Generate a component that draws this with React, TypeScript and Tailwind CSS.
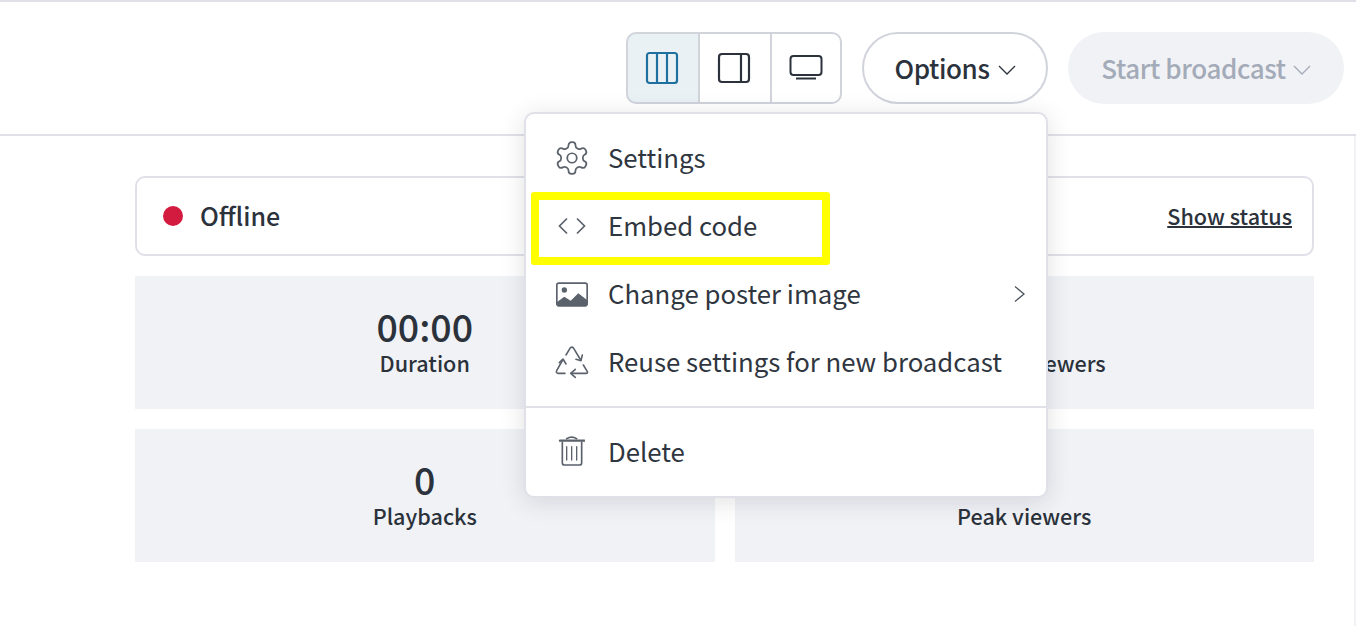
import React from "react";

const F = "font-['Noto_Sans_CJK_SC','Noto_Sans',sans-serif]";

function Stat({ big, label }: { big?: string; label: string }) {
  return (
    <div className="flex h-[133px] flex-col items-center justify-center bg-[#f1f2f6]">
      <div className="h-[40px] text-[37.500px] leading-[34px] font-medium text-[#2b323b]">{big}</div>
      <div className="text-[21.600px] leading-[28px] font-medium text-[#2b323b]">{label}</div>
    </div>
  );
}

function Row({ icon, label, chev }: { icon: React.ReactNode; label: string; chev?: boolean }) {
  return (
    <div className="flex h-[68px] items-center pl-[29px] pr-[19px] text-[25.750px] text-[#2f3640]">
      <div className="flex w-[54px] shrink-0 items-center">{icon}</div>
      <span className="-ml-px pb-[2px]">{label}</span>
      {chev && (
        <svg className="ml-auto" width="14" height="18" viewBox="0 0 14 18" fill="none" stroke="#4a525c" strokeWidth="1.3">
          <path d="M2 1.500l9 7.500-9 7.500" />
        </svg>
      )}
    </div>
  );
}

export default function App() {
  return (
    <div className={`${F} relative h-[628px] w-[1356px] overflow-hidden bg-white`}>
      <div className="h-[136px] border-t-2 border-b-2 border-[#e0e1e8]">
        <div className="flex items-center justify-end pt-[30px] pr-[12px]">
          <div className="flex h-[72px] w-[216px] overflow-hidden rounded-[10px] border-2 border-[#d2d4dc]">
            <div className="-my-[2px] -ml-[2px] flex w-[72px] shrink-0 items-center justify-center rounded-l-[10px] border-2 border-r-0 border-[#a5c8dc] bg-[#e9f1f5] pr-[2px]">
              <svg width="34" height="34" viewBox="0 0 34 34" fill="none" stroke="#1f6f9f" strokeWidth="2.2">
                <rect x="2" y="2" width="30" height="30" rx="2.500" />
                <path d="M12 2v30M22 2v30" />
              </svg>
            </div>
            <div className="flex w-[74px] shrink-0 items-center justify-center border-x-2 border-[#d2d4dc] pr-[2px]">
              <svg width="34" height="34" viewBox="0 0 34 34" fill="none" stroke="#2b323b" strokeWidth="2.2">
                <rect x="2" y="3" width="30" height="28" rx="3" />
                <path d="M24 3v28" />
              </svg>
            </div>
            <div className="flex flex-1 items-center justify-center">
              <svg width="34" height="34" viewBox="0 0 34 34" fill="none" stroke="#2b323b" strokeWidth="2">
                <rect x="1.500" y="5" width="31" height="19" rx="3" />
                <path d="M7 27.500h20" />
              </svg>
            </div>
          </div>
          <div className="ml-[20px] flex h-[72px] w-[186px] items-center justify-center gap-[8px] rounded-full border-2 border-[#d2d4dc] text-[26px] font-medium tracking-[-0.4px] text-[#2b323b]">
            <span className="pb-[2px]">Options</span>
            <svg className="mt-[4px]" width="18" height="10" viewBox="0 0 18 10" fill="none" stroke="#2b323b" strokeWidth="1.3">
              <path d="M1 1l8 8 8-8" />
            </svg>
          </div>
          <div className="ml-[20px] flex h-[72px] w-[276px] items-center justify-center gap-[7px] rounded-full bg-[#f1f2f6] text-[26px] font-medium tracking-[-0.4px] text-[#a4abb8]">
            <span className="pb-[2px]">Start broadcast</span>
            <svg className="mt-[4px]" width="18" height="10" viewBox="0 0 18 10" fill="none" stroke="#a4abb8" strokeWidth="1.3">
              <path d="M1 1l8 8 8-8" />
            </svg>
          </div>
        </div>
      </div>

      <div className="h-[490px] border-r-2 border-[#f1f2f6] pt-[40px] pl-[135px]">
        <div className="flex w-[1179px] flex-col">
          <div className="flex h-[80px] items-center rounded-[10px] border-2 border-[#e0e1e8] pr-[20px] pl-[26px]">
            <div className="h-[20px] w-[20px] rounded-full bg-[#d31a3f]" />
            <div className="ml-[17px] text-[25px] font-medium text-[#2b323b]">Offline</div>
            <div className="ml-auto text-[21.600px] font-medium text-[#2b323b] underline decoration-[2px]">Show status</div>
          </div>
          <div className="mt-[20px] grid grid-cols-2 gap-x-[20px] gap-y-[20px]">
            <Stat big="00:00" label="Duration" />
            <Stat big="" label="Current viewers" />
            <Stat big="0" label="Playbacks" />
            <Stat big="" label="Peak viewers" />
          </div>
        </div>
      </div>

      <div className="absolute top-[112px] left-[524px] h-[386px] w-[524px] rounded-[10px] border-2 border-[#e0e1e8] bg-white pt-[10px] shadow-[0_4px_24px_rgba(40,45,60,0.14)]">
        <Row
          label="Settings"
          icon={
            <svg className="-mx-[2px] shrink-0" width="38" height="38" viewBox="0 0 24 24" fill="none" stroke="#5b626c" strokeWidth="1.1" strokeLinecap="round" strokeLinejoin="round">
              <path d="M12.22 2h-.44a2 2 0 0 0-2 2v.18a2 2 0 0 1-1 1.730l-.43.25a2 2 0 0 1-2 0l-.15-.08a2 2 0 0 0-2.730.73l-.22.38a2 2 0 0 0 .73 2.730l.15.1a2 2 0 0 1 1 1.720v.51a2 2 0 0 1-1 1.740l-.15.09a2 2 0 0 0-.73 2.730l.22.38a2 2 0 0 0 2.730.73l.15-.08a2 2 0 0 1 2 0l.43.25a2 2 0 0 1 1 1.730V20a2 2 0 0 0 2 2h.44a2 2 0 0 0 2-2v-.18a2 2 0 0 1 1-1.730l.43-.25a2 2 0 0 1 2 0l.15.08a2 2 0 0 0 2.730-.73l.22-.39a2 2 0 0 0-.73-2.730l-.15-.08a2 2 0 0 1-1-1.740v-.5a2 2 0 0 1 1-1.740l.15-.09a2 2 0 0 0 .73-2.730l-.22-.38a2 2 0 0 0-2.730-.73l-.15.08a2 2 0 0 1-2 0l-.43-.25a2 2 0 0 1-1-1.730V4a2 2 0 0 0-2-2z" />
              <circle cx="12" cy="12" r="3" />
            </svg>
          }
        />
        <Row
          label="Embed code"
          icon={
            <svg className="ml-[3px]" width="28" height="18" viewBox="0 0 28 18" fill="none" stroke="#5b626c" strokeWidth="1.7">
              <path d="M9 1.500L1.500 9 9 16.500M19 1.500L26.500 9 19 16.500" />
            </svg>
          }
        />
        <Row
          label="Change poster image"
          chev
          icon={
            <svg className="ml-px" width="32" height="25" viewBox="108 34 96 75">
              <rect x="110.500" y="37.500" width="91" height="68" rx="6" fill="none" stroke="#5b626c" strokeWidth="5" />
              <circle cx="133" cy="58" r="8" fill="#5b626c" />
              <path d="M111 105V94L133 78L152 90L175 68L201 88V105Z" fill="#5b626c" />
            </svg>
          }
        />
        <Row
          label="Reuse settings for new broadcast"
          icon={
            <svg width="35" height="35" viewBox="15 15 105 105" fill="none" stroke="#5b626c" strokeWidth="4.800" strokeLinecap="round" strokeLinejoin="round">
              <path d="M48 45L60 25Q65 18 71 25L92 60" />
              <path d="M78 58L93 62L97 45" />
              <path d="M45 100H25Q17 100 20 92L38 60" />
              <path d="M28 68L39 57L48 72" />
              <path d="M100 75L112 95Q114 100 108 100H64" />
              <path d="M76 88L62 100L76 112" />
            </svg>
          }
        />
        <div className="mt-[10px] border-t-2 border-[#e0e1e8]" />
        <div className="mt-[10px]">
          <Row
            label="Delete"
            icon={
              <svg className="ml-[2px]" width="28" height="32" viewBox="111 498 84 96" fill="none" stroke="#5b626c" strokeLinecap="round">
                <path d="M120 512H193" strokeWidth="7" />
                <path d="M140 506Q155 497 170 506" strokeWidth="5" />
                <path d="M127 516V578Q127 585 134 585H178Q185 585 185 578V516" strokeWidth="5" />
                <path d="M140 530V570M155 530V570M170 530V570" strokeWidth="4" />
              </svg>
            }
          />
        </div>
      </div>

      <div className="absolute top-[192px] left-[531px] h-[73px] w-[299px] rounded-[3px] border-[8px] border-[#ffff00]" />
    </div>
  );
}
